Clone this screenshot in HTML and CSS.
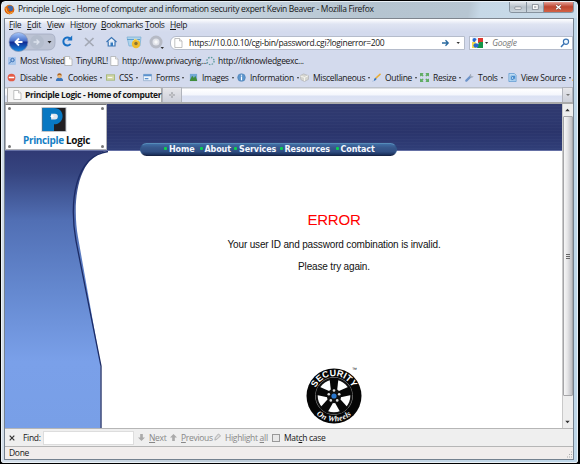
FILE: index.html
```html
<!DOCTYPE html>
<html lang="en">
<head>
<meta charset="utf-8">
<title>Principle Logic</title>
<link rel="stylesheet" href="styles.css">
</head>
<body>
<svg width="0" height="0" class="defs">
  <defs>
    <linearGradient id="blue" x2="0" y2="1"><stop stop-color="#a9c8fa"/><stop offset=".45" stop-color="#466fc9"/><stop offset=".5" stop-color="#102a91"/><stop offset="1" stop-color="#168be1"/></linearGradient>
    <linearGradient id="side" x2="0" y2="1"><stop stop-color="#303a75"/><stop offset=".08" stop-color="#364580"/><stop offset=".25" stop-color="#516fb4"/><stop offset=".5" stop-color="#6488cf"/><stop offset=".76" stop-color="#7aa0e9"/><stop offset="1" stop-color="#789fe7"/></linearGradient>
    <symbol id="page" viewBox="0 0 9 10"><path d="M.8.5h4.800L8 3v6.500H.8z" fill="#fff" stroke="#a6a7a9" stroke-width=".7"/><path d="M5.500.5V3H8" fill="#eee" stroke="#aaa" stroke-width=".6"/></symbol>
  </defs>
</svg>
<div class="window">
  <header class="titlebar">
    <svg class="fox" viewBox="0 0 12 12"><circle cx="6" cy="6" r="5.200" fill="#df7414"/><circle cx="6.700" cy="4.800" r="3.300" fill="#3f69a8"/><path d="M1 3l1.500 1L4 3l1 2 1.600.5-1.500 1.200 1 1.200 3-.4 1.700-3.800.3 3.400C10.200 10 8.300 11.300 5.800 11.200 2 11 .3 8 .7 5z" fill="#dc5d0e"/><path d="M2 4l1 4 3 2.500 3.600-1.600" fill="none" stroke="#f9c446"/></svg>
    <span class="title">Principle Logic - Home of computer and information security expert Kevin Beaver - Mozilla Firefox</span>
    <div class="controls"><i><svg viewBox="0 0 17 11"><rect x="5" y="5.500" width="7" height="2.500" rx=".6" fill="#fff" stroke="#666b76" stroke-width=".7"/></svg></i><i><svg viewBox="0 0 17 11"><rect x="5.500" y="3" width="6.500" height="5" fill="#fff" stroke="#666b76" stroke-width=".7"/><path d="M7.500 5.500h2.500" stroke="#666b76"/></svg></i><i class="close"><svg viewBox="0 0 29 11"><path d="M12 3.500l5 4.500m0-4.500l-5 4.500" stroke="#704640" stroke-width="2.600"/><path d="M12 3.500l5 4.500m0-4.500l-5 4.500" stroke="#fff" stroke-width="1.500"/></svg></i></div>
  </header>
  <div class="client">
    <nav class="menu"><span style="width:18px"><u>F</u>ile</span><span style="width:20px"><u>E</u>dit</span><span style="width:23px"><u>V</u>iew</span><span style="width:31px">Hi<u>s</u>tory</span><span style="width:44px"><u>B</u>ookmarks</span><span style="width:25px"><u>T</u>ools</span><span><u>H</u>elp</span></nav>
    <div class="navbar">
      <svg class="navicons" viewBox="0 0 164 22">
        <path d="M11 2h34q5 0 5 5v4q0 7-7 7H11z" fill="#bcc3d4" stroke="#a3abc1" stroke-width=".8"/>
        <circle cx="32" cy="10" r="7" fill="#b3bccc"/><path d="M28.500 10h5m-2-2.500l2.500 2.500-2.500 2.500" stroke="#dce2ed" fill="none" stroke-width="1.300"/>
        <circle cx="13.500" cy="10" r="9.500" fill="url(#blue)" stroke="#8793b4" stroke-width=".7"/>
        <path d="M10.500 10h7M14 6.500L10.500 10l3.500 3.500" stroke="#fff" fill="none" stroke-width="1.800"/>
        <path d="M42.500 9h4l-2 2.500z" fill="#222"/>
        <path d="M65 6.500A4 4 0 1 0 65.500 12" stroke="#176fc4" fill="none" stroke-width="2"/><path d="M67.200 3.500v5h-5z" fill="#176fc4"/>
        <path d="M80 6l8.500 8M88.500 6L80 14" stroke="#a3a8b4" stroke-width="1.700"/>
        <path d="M101.500 10l5-4.500 5 4.500M103.200 9.500V14h6.800V9.500" fill="#e9f2fb" stroke="#3b74b4" stroke-width="1.200"/><path d="M105.500 10.500h2.500V14h-2.500z" fill="#357abf"/>
        <path d="M122 5h14l-1 9h-11z" fill="#add3ec" stroke="#77aed3" stroke-width=".7"/><path d="M122 7.500h13" stroke="#5c9ed0"/><circle cx="131" cy="12" r="4.200" fill="#f0bc2e"/><circle cx="131" cy="11.500" r="1.700" fill="#8d7431"/><path d="M128 9l2-2 3 1.500" stroke="#f9dd77" fill="none"/>
        <circle cx="151" cy="10" r="5" fill="#e1e3ea" stroke="#b6bac5" stroke-width="3"/><circle cx="151" cy="10" r="1.700" fill="#f8f9fa"/><path d="M155.500 15h3.500l-1.700 2z" fill="#333"/>
      </svg>
      <div class="address"><svg class="page"><use href="#page"/></svg><span>https://10.0.0.10/cgi-bin/password.cgi?loginerror=200</span><svg class="go" viewBox="0 0 20 10"><path d="M1 5h6M4.500 2.300L7.200 5 4.500 7.700" stroke="#28699f" fill="none" stroke-width="1.300"/><path d="M15.500 4h3.400l-1.700 2z" fill="#333"/></svg></div>
      <div class="search"><svg class="g" viewBox="0 0 19 12"><path d="M0 0h15v12H0z" fill="#fff"/><path d="M6 1h5v5H6z" fill="#df382f"/><path d="M7 5h4v6H5z" fill="#149547"/><path d="M0 5h4v6H0z" fill="#f8dc4e"/><path d="M0 0h6v5H0z" fill="#e7f0fd"/><circle cx="2.500" cy="3" r="2" fill="#2869cd"/><ellipse cx="4" cy="8.500" rx="2.600" ry="2.200" fill="#2869cd"/><circle cx="4.500" cy="4.500" r="1.200" fill="#fff"/><path d="M13 5h3.200l-1.600 2z" fill="#333"/></svg><em>Google</em><svg class="mag" viewBox="0 0 10 10"><circle cx="6" cy="3.700" r="2.600" fill="#eef8ff" stroke="#3c75b4" stroke-width="1.200"/><path d="M4.200 5.500L1 9" stroke="#3c75b4" stroke-width="1.500"/></svg></div>
    </div>
    <div class="bookmarks">
      <span style="width:56px"><svg viewBox="0 0 9 10"><rect y="1" width="8" height="8" rx="1" fill="#a9c6eb"/><circle cx="4.500" cy="4" r="1.700" fill="none" stroke="#356eb5"/><path d="M3.200 5.200L1.200 7.500" stroke="#356eb5"/></svg><b>Most Visited</b></span>
      <span style="width:46px"><svg><use href="#page"/></svg><b>TinyURL!</b></span>
      <span style="width:96px"><svg><use href="#page"/></svg><b class="web">http://www.privacyrig...</b></span>
      <span><svg viewBox="0 0 9 10"><circle cx="4.500" cy="5" r="3.600" fill="none" stroke="#5b9a9c" stroke-width="1.300" stroke-dasharray="1.500 1.327"/></svg><b class="know">http://itknowledgeexc...</b></span>
    </div>
    <div class="tools">
      <span style="width:48px"><svg viewBox="0 0 10 10"><circle cx="5" cy="5" r="4.300" fill="#e35b47"/><path d="M2 5h6" stroke="#fff" stroke-width="1.700"/></svg><b>Disable</b></span>
      <span style="width:51px"><svg viewBox="0 0 10 10"><path d="M1 9q0-4 4-4t4 4z" fill="#3b75b9"/><circle cx="5" cy="3.300" r="2.500" fill="#e9b779"/><path d="M2.500 3q0-2.600 2.500-2.600T7.500 3L5 2z" fill="#a65f20"/></svg><b>Cookies</b></span>
      <span style="width:37px"><svg viewBox="0 0 10 10"><path d="M0 1.500h10v7H0z" fill="#a6b879"/><path d="M1 2.500h8v5H1z" fill="#d4d9aa"/><path d="M2 5h5" stroke="#fff"/></svg><b>CSS</b></span>
      <span style="width:46px"><svg viewBox="0 0 10 10"><path d="M.5 1.500h9v7h-9z" fill="#edf5fc" stroke="#8ba9c9" stroke-width=".8"/><path d="M.5 1.500h9v2h-9zM2 5.500h4v1.500H2z" fill="#5a91cd"/></svg><b>Forms</b></span>
      <span style="width:48px"><svg viewBox="0 0 10 10"><path d="M1 1h8v8H1z" fill="#74a9d6"/><path d="M1 8l2.500-5 2 2.500L7 3l2 5v1H1z" fill="#408d3a"/></svg><b>Images</b></span>
      <span style="width:63px"><svg viewBox="0 0 10 10"><circle cx="5" cy="5" r="4.300" fill="#5e96cc" stroke="#4076ad" stroke-width=".5"/><path d="M5 4v4M5 2v1" stroke="#fff" stroke-width="1.300"/></svg><b>Information</b></span>
      <span style="width:72px"><svg viewBox="0 0 10 10"><path d="M0 3l4-2 5.500 2v4L5 9.500 1 7.500z" fill="#d5d5d0" stroke="#aaa" stroke-width=".6"/><path d="M.5 3.300L5 5l4-2M5 5v4" stroke="#f7f7f2" fill="none"/></svg><b>Miscellaneous</b></span>
      <span style="width:48px"><svg viewBox="0 0 10 10"><path d="M9.500 1L4 6" stroke="#eaad35" stroke-width="1.600"/><path d="M4.500 5.500q-3 0-2 3L0 9q3 .5 5-2z" fill="#3a75b9"/></svg><b>Outline</b></span>
      <span style="width:45px"><svg viewBox="0 0 10 10"><path d="M0 0h4L3 1.500 4 3 3 4 1.500 3 0 4zM10 0v4L8.500 3 7 4 6 3 7 1.500 6 0zM0 10V6l1.500 1L3 6l1 1-1 1.500L4 10zM10 10H6l1-1.500L6 7l1-1 1.500 1L10 6z" fill="#61ad65"/></svg><b>Resize</b></span>
      <span style="width:43px"><svg viewBox="0 0 10 10"><path d="M1.500 8.500L6 4" stroke="#6c93c9" stroke-width="2.500" stroke-linecap="round"/><path d="M7 .8A2.200 2.200 0 1 0 9.500 3.200L7.500 4 6.500 2.500z" fill="#a1aab8"/></svg><b>Tools</b></span>
      <span style="width:64px"><svg viewBox="0 0 10 10"><path d="M1 .5h6l2 2v7H1z" fill="#bddcf4" stroke="#5795ce" stroke-width=".8"/><path d="M3 3h5v5H3z" fill="#498dce"/><path d="M4 4l1.500 1.500L4 7M6 7h2" stroke="#fff" fill="none" stroke-width=".7"/></svg><b>View Source</b></span>
      <svg viewBox="0 0 10 10"><path d="M0 9l1-3 4-4 3 3-4 4z" fill="#edb547"/></svg>
    </div>
    <div class="tabs"><div class="tab"><svg><use href="#page"/></svg><strong>Principle Logic - Home of computer a...</strong></div><div class="newtab"><svg viewBox="0 0 6 6"><path d="M3 .5v5M.5 3h5" stroke="#85878d" stroke-width="1.700"/><path d="M3 1v4M1 3h4" stroke="#fff" stroke-width=".6"/></svg></div><div class="tabmenu"><svg viewBox="0 0 6 6"><path d="M1 2h4L3 4z" fill="#777"/></svg></div></div>
    <div class="view">
      <main>
        <div class="banner"></div>
        <svg class="sidebar" viewBox="0 0 104 277"><path d="M0 0H103C72 4 67 52 73 86L95.500 213V277H0z" fill="url(#side)"/><path d="M103 .5C70 5 64 50 71 90L96 215V277" fill="none" stroke="#1c2b65" stroke-width="1.300"/></svg>
        <div class="logo"><i></i><i></i><i></i><i></i><svg viewBox="0 0 26 26"><path d="M0 0h26v26H0z" fill="#c6cbd0"/><path d="M1 1h24v24H1z" fill="#211f22"/><path d="M1 1h12c12 0 12 17 0 17v7H1z" fill="#0878c2"/><path d="M10 7h4q3 0 3 3t-3 3h-4z" fill="#e0e7ef"/><circle cx="11" cy="9.700" r="1.500" fill="#fff"/></svg><p><span>Principle</span> Logic</p></div>
        <nav class="pill"><a style="width:35.500px">Home</a><a style="width:34.500px">About</a><a style="width:45.500px">Services</a><a style="width:56px">Resources</a><a>Contact</a></nav>
        <section class="message"><h1>ERROR</h1><p>Your user ID and password combination is invalid.</p><p>Please try again.</p></section>
        <svg class="wheel" viewBox="0 0 58 58">
          <circle cx="28" cy="30" r="27.500" fill="#050505"/><circle cx="28" cy="30" r="18.500" fill="#fff" stroke="#777" stroke-width=".8"/><circle cx="28" cy="30" r="17.300" fill="none" stroke="#111" stroke-width="2"/>
          <g fill="#080808"><path id="sp" d="M25.500 30L23.500 12h9l-2 18z"/><use href="#sp" transform="rotate(72 28 30)"/><use href="#sp" transform="rotate(144 28 30)"/><use href="#sp" transform="rotate(216 28 30)"/><use href="#sp" transform="rotate(288 28 30)"/></g>
          <circle cx="28" cy="30" r="7.200" fill="#111"/><g fill="#ddd"><circle cx="28" cy="24.500" r="1.300"/><circle cx="33.200" cy="28.300" r="1.300"/><circle cx="31.200" cy="34.400" r="1.300"/><circle cx="24.800" cy="34.400" r="1.300"/><circle cx="22.800" cy="28.300" r="1.300"/></g><circle cx="28" cy="30" r="2.600" fill="#2b78cf"/>
          <path id="top" d="M8 30a20 20 0 0 1 40 0" fill="none"/><path id="bottom" d="M2.500 30a25.500 25.500 0 0 0 51 0" fill="none"/>
          <text class="sec"><textPath href="#top" startOffset="50%">SECURITY</textPath></text><text class="on"><textPath href="#bottom" startOffset="50%">On Wheels</textPath></text><text class="tm" x="46" y="4.500">™</text>
        </svg>
      </main>
      <div class="scroll"><svg viewBox="0 0 10 12"><path d="M2.500 7.500h5L5 4.500z" fill="#333"/></svg><div class="thumb"><s></s><s></s><s></s></div><svg class="down" viewBox="0 0 10 12"><path d="M2.500 4.500h5L5 7.500z" fill="#333"/></svg></div>
    </div>
    <div class="find">
      <svg class="x" viewBox="0 0 6 6"><path d="M.7.7l4.600 4.600M5.300.7L.7 5.300" stroke="#333" stroke-width="1.200"/></svg><span class="label">Find:</span><input>
      <svg class="ic" viewBox="0 0 8 10"><path d="M2.500 1h3v4H8L4 9 0 5h2.500z" fill="#aaa"/></svg><span class="off" style="width:21px"><u>N</u>ext</span>
      <svg class="ic" viewBox="0 0 8 10"><path d="M2.500 9h3V5H8L4 1 0 5h2.500z" fill="#aaa"/></svg><span class="off" style="width:33px"><u>P</u>revious</span>
      <svg class="ic" viewBox="0 0 8 10"><path d="M1 8l.5-3L5 1l2.500 2L4 6.500z" fill="#ddd" stroke="#aaa"/></svg><span class="off" style="width:47px">Highlight <u>a</u>ll</span>
      <i class="check"></i><span>Mat<u>c</u>h case</span>
    </div>
    <footer class="status"><span>Done</span><svg viewBox="0 0 8 8"><path d="M6 1h1M4 3.500h1M6 3.500h1M2 6h1M4 6h1M6 6h1" stroke="#aaa" stroke-width="1"/></svg></footer>
  </div>
</div>
</body>
</html>
```
FILE: styles.css
```css
*{box-sizing:border-box}
body{margin:0;width:580px;height:464px;overflow:hidden;background:#000;font:8.500px/12px "Open Sans","Noto Sans",sans-serif;font-stretch:88%;letter-spacing:-.3px;color:#171717;white-space:nowrap}
.defs{position:absolute}
svg{display:block;flex:none}
b{font-weight:400}
u{text-decoration-thickness:.6px;text-underline-offset:1px}
.window{height:462px;margin:1px 2px 1px 1px;border:1px solid #eaf1f7;border-radius:4px 4px 2px 2px;background:linear-gradient(90deg,#d4dfea,#bdccd9 40%,#c4d6e5 70%,#bed7e9);padding:0 3px 3px 2px}
.titlebar{height:16px;display:flex;background:linear-gradient(100deg,#e0e8f0,#cbd8e3 30%,#b5c4d0 65%,#b7c6d2 81%,#c6d8e6 83%,#c9dceb);margin:0 -3px 0 -2px;padding-right:3px}
.fox{width:11px;height:11px;margin:2px 3px 0 2px}
.title{padding-top:1px;flex:1}
.controls{display:flex;width:65px;height:11px;border:1px solid #87939f;border-top:0;border-radius:0 0 3px 3px;overflow:hidden}
.controls i{width:17px;background:linear-gradient(#e3e7ec,#b6c0c9 50%,#cbd5dd);border-right:1px solid #87939f}
.controls i svg{height:10px;width:100%}
.controls .close{flex:1;border:0;background:linear-gradient(#e6a096,#bd4530 48%,#d36245)}
.client{height:442px;border:1px solid #74818f;border-top-color:#7e858e;background:#d3daed;display:flex;flex-direction:column}
.menu{height:13px;display:flex;padding-left:4px;background:linear-gradient(#fff,#dfe4f2 40%,#d3daed);line-height:12px}
.navbar{height:22px;display:flex;align-items:center}
.navicons{width:164px;height:22px}
.address{width:299px;height:14px;margin-left:1px;background:#fff;border:1px solid #b5bccb;border-radius:6px 0 0 6px;display:flex;align-items:center;padding:0 3px}
.page{width:9px;height:10px;margin-right:6px}
.go{width:20px;height:10px;margin-left:auto}
.search{width:105px;height:14px;margin-left:4px;background:#fff;border:1px solid #b5bccb;display:flex;align-items:center;padding:0 2px}
.g{width:19px;height:12px}.search em{color:#777;margin-left:1px}.mag{width:10px;height:10px;margin-left:auto}
.bookmarks{height:14px;display:flex;align-items:center;padding-left:3px}
.bookmarks span{display:flex;align-items:center}
.bookmarks svg{width:9px;height:10px;margin-right:3px}
.tools{height:19px;display:flex;align-items:center;padding-left:2px;overflow:hidden}
.tools span{display:flex;align-items:center;flex:none}
.tools svg{width:9px;height:9px;margin-right:4px}
.tools span:after{content:"";border:1.500px solid transparent;border-top:2px solid #333;border-bottom:0;margin-left:3px}
.tabs{height:17px;display:flex;background:linear-gradient(#bdc2ca 0 1px,#fff 2px,#f4f6fc 8px,#dbe1f3 9px,#e0e5f5);border-bottom:2px solid #aaa;padding-left:2px}
.tab{width:155px;border:1px solid #aaa;border-bottom:0;background:#f3f3f3;display:flex;align-items:center;border-radius:2px 2px 0 0}
.tab svg{width:9px;height:10px;margin:0 3px 0 5px}.tab strong{letter-spacing:-.35px;font-weight:700}
.newtab,.tabmenu{width:20px;background:linear-gradient(#e6e6e9,#cdd0da);border:1px solid #b1b4bc;border-bottom:0;display:flex;align-items:center;justify-content:center}
.newtab svg{width:6px;height:6px}.tabmenu{width:11px;margin-left:auto}.tabmenu svg{width:6px}
.view{height:324px;display:flex;background:#fff}
main{width:560px;position:relative;overflow:hidden;background:#fff}
.banner{height:47px;background:repeating-linear-gradient(transparent 0 2px,#ffffff05 2px 3px),linear-gradient(#30396e,#2e3970 30%,#2a346b 60%,#303e78);border-bottom:1px solid #6570a5}
.sidebar{width:104px;height:277px}
.logo{position:absolute;left:0;top:0;width:102px;height:46px;background:#fff;border:1px solid #b1b2b7;border-top-color:#777;text-align:center}
.logo svg{width:26px;height:25px;margin:2px auto 0 35px}
.logo p{font:700 10px/14px "Open Sans",sans-serif;letter-spacing:-.35px;margin:1px 0 0 1px;color:#111}
.logo p span{color:#167fc5}
.logo i{position:absolute;width:3px;height:3px;border-radius:50%;background:#777;left:2px;top:2px}
.logo i:nth-child(2){left:95px}.logo i:nth-child(3){top:40px}.logo i:nth-child(4){left:95px;top:40px}
.pill{position:absolute;left:135px;top:39px;width:257px;height:13px;border-radius:7px;background:linear-gradient(#406fa6,#38598e 30%,#304e82 70%,#182d58);border:1px solid #315a8c;border-top-color:#568bb8;border-bottom-color:#172445;display:flex;padding-left:23px;color:#f4f8ff;font:700 8px/12px "DejaVu Sans",sans-serif;letter-spacing:-.1px}
.pill a{display:flex}
.pill a:before{content:"";width:3px;height:3px;border-radius:1px;background:#0bd052;margin:3px 2px 0 0}
.message{position:absolute;left:129px;width:400px;top:107px;text-align:center;font:10px/12px "Liberation Sans",sans-serif;letter-spacing:-.16px;color:#111}
.message h1{font:15px/17px "Liberation Sans",sans-serif;letter-spacing:-.2px;color:#f00;margin:0 0 11px}
.message p{margin:0 0 10px}
.wheel{position:absolute;left:301px;top:262px;width:58px;height:58px}
.sec,.on{text-anchor:middle;fill:#fff;letter-spacing:0}
.sec{font:bold 9px "Liberation Sans",sans-serif}.on{font:italic bold 8px "Liberation Serif",serif;letter-spacing:.3px}
.tm{font:5px "Liberation Sans",sans-serif;letter-spacing:0}
.scroll{width:11px;background:#eee;border-left:1px solid #c9c9c9;display:flex;flex-direction:column}
.scroll svg{width:9px;height:12px}.scroll .down{margin-top:auto}
.thumb{height:280px;border:1px solid #a5a5a8;border-radius:1px;background:linear-gradient(90deg,#f7f7f7,#e4e4e6 45%,#bdbec3);display:flex;flex-direction:column;align-items:center;justify-content:center;gap:1px}
.thumb s{width:4px;height:1px;background:#666}
.find{height:18px;border-top:1px solid #b6b6b6;background:#efefef;display:flex;align-items:center;padding-left:4px}
.x{width:6px;height:6px}.label{margin-left:8px;width:20px}
.find input{width:91px;height:14px;border:1px solid #ddd;background:#fff;padding:0;margin:0 4px 0 0}
.ic{width:7px;height:9px;margin-right:4px}.off{color:#888}
.check{width:8px;height:8px;border:1px solid #999;background:#e8e8e8;margin-right:4px}
.status{flex:1;border-top:1px solid #b6b6b6;background:#f1edec;display:flex;align-items:center;justify-content:space-between;padding-left:4px}
.status svg{width:8px;height:8px;align-self:flex-end}
```
